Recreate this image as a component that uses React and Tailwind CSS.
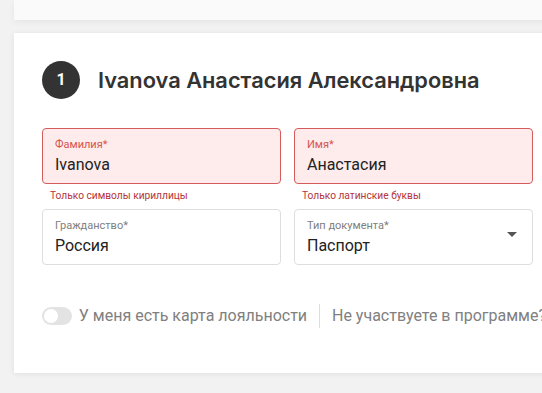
import React from "react";

function Field({ label, value, error, hint, select }) {
  return (
    <div className="w-[239px]">
      <div
        className={`relative h-[56px] rounded-[4px] border px-[12px] pt-[9px] ${
          error ? "border-[#d65b5b] bg-[#fdeceb]" : "border-[#dedede] bg-white"
        }`}
      >
        <p
          className={`text-[11px] leading-[14px] ${
            error ? "text-[#d9534f]" : "text-[#808080]"
          }`}
        >
          {label}
        </p>
        <p className="mt-[3px] text-[16px] leading-[20px] text-[#222]">{value}</p>
        {select && (
          <svg
            className="absolute right-[15px] top-[22px]"
            width="10"
            height="6"
            viewBox="0 0 10 6"
          >
            <path d="M0 0h10L5 5z" fill="#555" />
          </svg>
        )}
      </div>
      {hint && (
        <p className="mt-[5px] pl-[8px] text-[10.2px] leading-[14px] text-[#b5353a]">{hint}</p>
      )}
    </div>
  );
}

export default function App() {
  return (
    <div
      className="h-[393px] w-[542px] overflow-hidden bg-[#f2f2f2]"
      style={{ fontFamily: "Roboto, 'Noto Sans', sans-serif" }}
    >
      <div className="ml-[14px] h-[20px] w-[560px] bg-[#fafafa] shadow-[0_2px_6px_rgba(0,0,0,0.06)]" />
      <div className="ml-[14px] mt-[13px] h-[340px] w-[560px] bg-white px-[28px] pt-[28px] shadow-[0_1px_6px_rgba(0,0,0,0.08)]">
        <div className="flex items-center gap-[18px]">
          <div className="flex h-[38px] w-[38px] items-center justify-center rounded-full bg-[#333] text-[16px] font-bold text-white">
            1
          </div>
          <h2
            className="text-[21.8px] font-semibold text-[#333]"
            style={{ fontFamily: "Inter, 'Noto Sans', sans-serif" }}
          >
            Ivanova Анастасия Александровна
          </h2>
        </div>
        <div className="mt-[29px] flex gap-[13px]">
          <Field label="Фамилия*" value="Ivanova" error hint="Только символы кириллицы" />
          <Field label="Имя*" value="Анастасия" error hint="Только латинские буквы" />
        </div>
        <div className="mt-[6px] flex gap-[13px]">
          <Field label="Гражданство*" value="Россия" />
          <Field label="Тип документа*" value="Паспорт" select />
        </div>
        <div className="mt-[39px] flex items-center whitespace-nowrap">
          <div className="flex h-[18px] w-[32px] items-center rounded-full bg-[#e3e3e3] px-[2px]">
            <div className="h-[14px] w-[14px] rounded-full bg-white" />
          </div>
          <span className="ml-[7px] text-[16px] text-[#808080]">У меня есть карта лояльности</span>
          <div className="mx-[12px] h-[24px] w-px bg-[#dcdcdc]" />
          <span className="text-[16px] text-[#808080]">Не участвуете в программе?</span>
        </div>
      </div>
    </div>
  );
}
